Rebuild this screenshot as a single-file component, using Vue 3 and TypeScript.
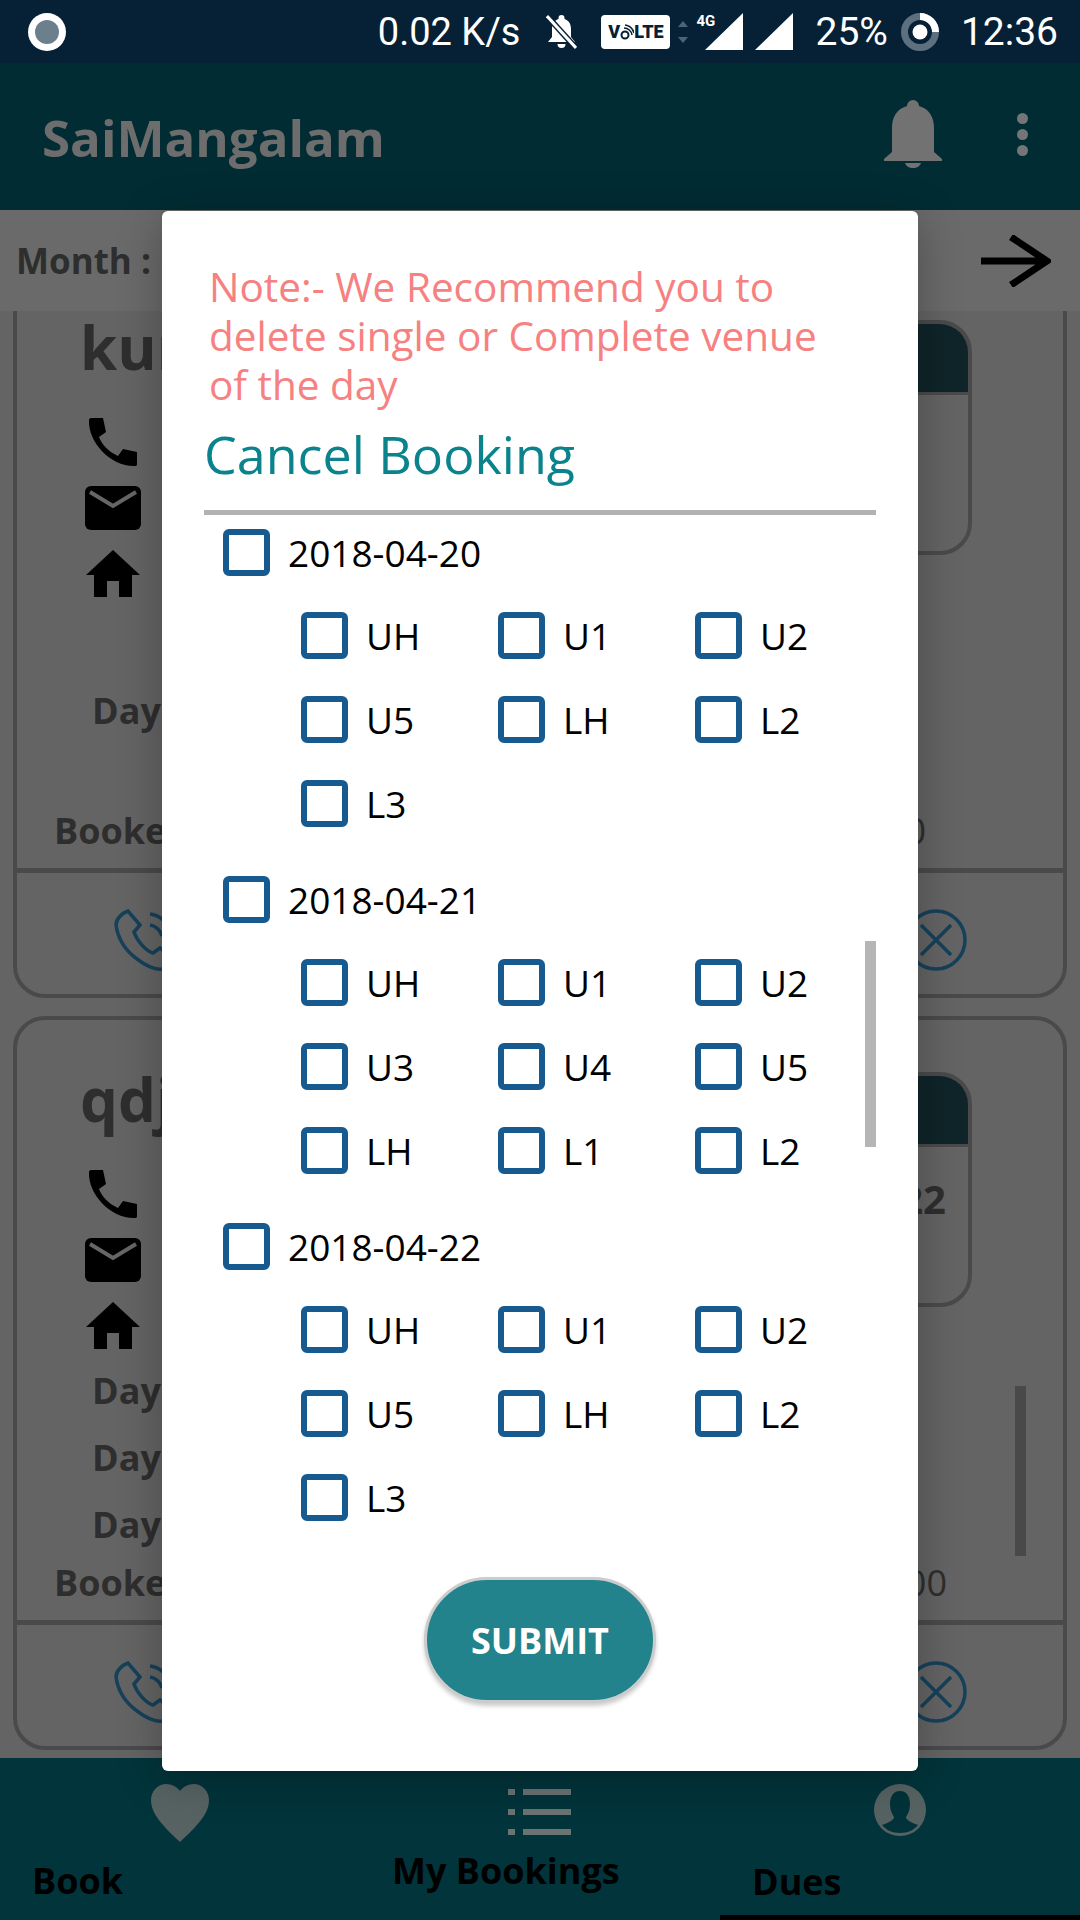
<script setup lang="ts">
type DateGroup = { date: string; venues: string[] };
type Booking = { name: string; days: string[]; slot: string; amount: string; amountInset: number };

const groups: DateGroup[] = [
  { date: "2018-04-20", venues: ["UH", "U1", "U2", "U5", "LH", "L2", "L3"] },
  { date: "2018-04-21", venues: ["UH", "U1", "U2", "U3", "U4", "U5", "LH", "L1", "L2"] },
  { date: "2018-04-22", venues: ["UH", "U1", "U2", "U5", "LH", "L2", "L3"] },
];

const bookings: Booking[] = [
  { name: "kuruva", days: ["Day 1"], slot: "", amount: "5000", amountInset: 137 },
  { name: "qdjk", days: ["Day 1", "Day 2", "Day 3"], slot: "22", amount: "15000", amountInset: 116 },
];
</script>

<template>
  <div class="screen">
    <header class="status">
      <span class="rec"><i></i></span>
      <div class="status-right">
        <span class="speed">0.02 K/s</span>
        <svg class="bell-off" viewBox="0 0 31 37" width="31" height="37">
          <path d="M15.500 2a3 3 0 0 1 3 3v1c5 1.500 6.500 6 6.500 10v8l4 5H2l4-5v-8c0-4 1.500-8.500 6.500-10V5a3 3 0 0 1 3-3z" fill="#fff" />
          <path d="M11.500 31h8a4 4 0 0 1-8 0z" fill="#fff" />
          <path d="M1 3l29 32" stroke="#062035" stroke-width="6" />
          <path d="M1 3l29 32" stroke="#fff" stroke-width="3" />
        </svg>
        <span class="volte">
          <span>V</span>
          <svg viewBox="0 0 14 16" width="14" height="16">
            <circle cx="5" cy="11" r="3.500" fill="none" stroke="#062035" stroke-width="2" />
            <path d="M4 4a8 8 0 0 1 8 7M5 1a11 11 0 0 1 9 8" fill="none" stroke="#062035" stroke-width="1.600" />
          </svg>
          <span>LTE</span>
        </span>
        <svg class="updown" viewBox="0 0 10 28" width="10" height="28">
          <path d="M5 3l5 6H0zM5 25l5-6H0z" fill="#4e6375" />
        </svg>
        <span class="signal">
          <span class="four-g">4G</span>
          <svg viewBox="0 0 38 37" width="38" height="37"><path d="M38 0v37H0z" fill="#fff" /></svg>
        </span>
        <svg class="tri2" viewBox="0 0 38 37" width="38" height="37"><path d="M38 0v37H0z" fill="#fff" /></svg>
        <span class="battery">25%</span>
        <svg class="ring" viewBox="0 0 38 38" width="38" height="38">
          <circle cx="19" cy="19" r="15.500" fill="none" stroke="#5c7080" stroke-width="7" />
          <path d="M19 3.500A15.500 15.500 0 0 1 34.500 19" fill="none" stroke="#fff" stroke-width="7" />
          <circle cx="19" cy="19" r="7.500" fill="#fff" />
        </svg>
        <span class="clock">12:36</span>
      </div>
    </header>

    <div class="appbar">
      <span class="brand">SaiMangalam</span>
      <svg class="bell" viewBox="0 0 58 68" width="58" height="68">
        <path d="M29 0a6 6 0 0 1 6 6c11 3 15 12 15 22v24l8 7v2H0v-2l8-7V28C8 18 12 9 23 6a6 6 0 0 1 6-6z" fill="#727272" />
        <path d="M21 63h16c-1 3-4 5-8 5s-7-2-8-5z" fill="#727272" />
      </svg>
      <span class="dots"><i></i><i></i><i></i></span>
    </div>

    <div class="month">
      <span class="month-label">Month :</span>
      <svg viewBox="0 0 70 52" width="70" height="52">
        <path d="M0 26h64M30 2l36 24-36 24" fill="none" stroke="#000" stroke-width="7" />
      </svg>
    </div>

    <main class="list">
      <section v-for="b in bookings" :key="b.name" class="card">
        <div class="card-body">
          <div class="info">
            <div class="name">{{ b.name }}</div>
            <div class="contact">
              <svg viewBox="0 0 50 50" width="50" height="50">
                <path d="M3 2h12l3 14-7 5c3 8 10 15 19 19l5-7 14 3v12c0 2-1 2-3 2C22 50 0 26 1 4c0-1 1-2 2-2z" fill="#000" />
              </svg>
              <svg viewBox="0 0 56 44" width="56" height="44">
                <rect width="56" height="44" rx="6" fill="#000" />
                <path d="M5 6l23 14L51 6" fill="none" stroke="#666" stroke-width="4" />
              </svg>
              <svg viewBox="0 0 54 47" width="54" height="47">
                <path d="M27 0l27 25h-8v22H33V31H21v16H8V25H0z" fill="#000" />
              </svg>
            </div>
            <div class="days">
              <span v-for="d in b.days" :key="d" class="day">{{ d }}</span>
            </div>
          </div>
          <div class="slot">
            <div class="slot-head"></div>
            <div class="slot-value">{{ b.slot }}</div>
          </div>
        </div>
        <div class="booked" :style="{ paddingRight: b.amountInset + 'px' }">
          <span>Booked by</span>
          <span class="amount">{{ b.amount }}</span>
        </div>
        <div class="actions">
          <svg viewBox="0 0 64 64" width="64" height="64">
            <path d="M14 3c-6 2-12 8-12 14 2 14 10 26 21 34 8 6 18 11 25 10 5-1 9-6 11-10l-13-11-7 5c-7-2-16-12-19-21l6-7z" fill="none" stroke="#15415a" stroke-width="3.500" />
            <path d="M36 6c10 1 20 10 22 22M36 17c6 1 10 5 12 11" fill="none" stroke="#15415a" stroke-width="3.500" />
          </svg>
          <svg viewBox="0 0 62 62" width="62" height="62">
            <circle cx="31" cy="31" r="29" fill="none" stroke="#15415a" stroke-width="3.500" />
            <path d="M16 16l30 30M46 16L16 46" fill="none" stroke="#15415a" stroke-width="3.500" />
          </svg>
        </div>
      </section>
      <div class="list-scroll"></div>
    </main>

    <nav class="tabs">
      <div class="tab">
        <svg viewBox="0 0 58 58" width="58" height="58">
          <path d="M29 58C12 42 0 30 0 16 0 7 7 0 15 0c6 0 11 3 14 7 3-4 8-7 14-7 8 0 15 7 15 16 0 14-12 26-29 42z" fill="#576363" />
        </svg>
        <span class="tab-label">Book</span>
      </div>
      <div class="tab tab-mid">
        <svg viewBox="0 0 64 48" width="64" height="48">
          <path d="M0 4h7M15 4h48M0 24h7M15 24h48M0 44h7M15 44h48" stroke="#6c7373" stroke-width="6" />
        </svg>
        <span class="tab-label">My Bookings</span>
      </div>
      <div class="tab tab-active">
        <svg viewBox="0 0 52 52" width="52" height="52">
          <circle cx="26" cy="26" r="26" fill="#576363" />
          <path d="M26 7c-7 0-10 6-10 13 0 6 2 10 4 13 0 3-4 5-12 8 4 5 10 8 18 8s14-3 18-8c-8-3-12-5-12-8 2-3 4-7 4-13 0-7-3-13-10-13z" fill="#02323a" />
        </svg>
        <span class="tab-label">Dues</span>
      </div>
    </nav>

    <div class="dialog">
      <p class="note">Note:- We Recommend you to delete single or Complete venue of the day</p>
      <h2 class="title">Cancel Booking</h2>
      <div class="rule"></div>
      <div class="picker">
        <div v-for="g in groups" :key="g.date" class="group">
          <label class="check date-row">
            <span class="box"></span>
            <span>{{ g.date }}</span>
          </label>
          <div class="venues">
            <label v-for="v in g.venues" :key="v" class="check">
              <span class="box"></span>
              <span>{{ v }}</span>
            </label>
          </div>
        </div>
        <div class="picker-scroll"></div>
      </div>
      <button class="submit">SUBMIT</button>
    </div>
  </div>
</template>

<style>
body {
  margin: 0;
  background: #666;
}
</style>

<style scoped>
.screen {
  position: relative;
  width: 1080px;
  height: 1920px;
  overflow: hidden;
  display: flex;
  flex-direction: column;
  font-family: "Open Sans", sans-serif;
  background: #666;
}

.status {
  height: 63px;
  background: #062035;
  display: flex;
  align-items: center;
  justify-content: space-between;
  color: #fff;
  font-family: Roboto, sans-serif;
  font-size: 39px;
  flex: none;
}
.rec {
  margin-left: 28px;
  width: 38px;
  height: 38px;
  border-radius: 50%;
  background: #fff;
  display: flex;
  align-items: center;
  justify-content: center;
}
.rec i {
  width: 24px;
  height: 24px;
  border-radius: 50%;
  background: #6c7f8c;
}
.status-right {
  display: flex;
  align-items: center;
  padding-right: 22px;
}
.speed {
  margin-right: 26px;
  font-size: 38px;
}
.bell-off {
  margin-right: 24px;
}
.volte {
  width: 69px;
  height: 34px;
  background: #fff;
  border-radius: 4px;
  color: #062035;
  font-size: 18px;
  font-weight: 900;
  display: flex;
  align-items: center;
  justify-content: center;
  margin-right: 8px;
}
.updown {
  margin-right: 17px;
}
.signal {
  position: relative;
  display: flex;
  width: 38px;
  margin-right: 12px;
}
.four-g {
  position: absolute;
  left: -9px;
  top: -1px;
  font-size: 15px;
  font-weight: 700;
}
.tri2 {
  margin-right: 22px;
}
.battery {
  margin-right: 13px;
}
.ring {
  margin-right: 22px;
}

.appbar {
  height: 147px;
  background: #012c33;
  display: flex;
  align-items: center;
  padding: 0 52px 0 42px;
  flex: none;
}
.brand {
  flex: 1;
  color: #6d6d6d;
  font-size: 51px;
  font-weight: 700;
}
.bell {
  margin-right: 75px;
  margin-bottom: 5px;
}
.dots {
  display: flex;
  flex-direction: column;
  gap: 5px;
  margin-bottom: 4px;
}
.dots i {
  width: 11px;
  height: 11px;
  border-radius: 50%;
  background: #757575;
}

.month {
  height: 101px;
  background: #6a6a6a;
  display: flex;
  align-items: center;
  justify-content: space-between;
  padding: 0 29px 0 16px;
  flex: none;
}
.month-label {
  color: #2e2e2e;
  font-size: 35px;
  font-weight: 700;
}

.list {
  position: relative;
  flex: 1;
  min-height: 0;
  overflow: hidden;
  padding: 0 13px;
  background: #646465;
}
.card {
  height: 734px;
  box-sizing: border-box;
  border: 4px solid #4b4a4b;
  border-radius: 32px;
  display: flex;
  flex-direction: column;
  margin-bottom: 18px;
}
.card:first-child {
  margin-top: -47px;
}
.card-body {
  flex: 1;
  min-height: 0;
  display: flex;
  justify-content: space-between;
}
.info {
  padding-left: 66px;
  display: flex;
  flex-direction: column;
}
.name {
  font-size: 60px;
  font-weight: 700;
  color: #2e2e2e;
  margin: 39px 0 0 -3px;
  height: 80px;
  line-height: 80px;
}
.contact {
  margin: 29px 0 0 2px;
  width: 56px;
  display: flex;
  flex-direction: column;
  align-items: center;
  gap: 20px;
}
.days {
  flex: 1;
  display: flex;
  flex-direction: column;
  justify-content: center;
  padding-top: 8px;
}
.card:first-child .days {
  padding-top: 18px;
}
.day {
  font-size: 36px;
  font-weight: 700;
  color: #2e2e2e;
  padding-left: 9px;
  height: 67px;
  line-height: 67px;
}
.slot {
  width: 240px;
  height: 235px;
  box-sizing: border-box;
  margin: 52px 91px 0 0;
  border: 4px solid #4b4a4b;
  border-radius: 32px;
  overflow: hidden;
}
.slot-head {
  height: 68px;
  background: #0f2529;
  border-bottom: 3px solid #4b4a4b;
}
.slot-value {
  text-align: right;
  padding: 24px 22px 0 0;
  font-size: 40px;
  font-weight: 700;
  color: #2e2e2e;
}
.booked {
  display: flex;
  justify-content: space-between;
  padding-left: 37px;
  height: 62px;
  font-size: 36px;
  font-weight: 700;
  color: #2e2e2e;
}
.amount {
  font-weight: 400;
}
.actions {
  height: 126px;
  box-sizing: border-box;
  border-top: 5px solid #4b4a4b;
  display: flex;
  justify-content: space-between;
  align-items: center;
  padding: 12px 96px 0 97px;
}
.list-scroll {
  position: absolute;
  left: 1015px;
  top: 1075px;
  width: 11px;
  height: 170px;
  background: #494949;
}

.tabs {
  height: 162px;
  background: #02343b;
  display: flex;
  flex: none;
}
.tab {
  width: 360px;
  box-sizing: border-box;
  position: relative;
  display: flex;
  flex-direction: column;
  align-items: center;
  padding-top: 26px;
}
.tab-label {
  align-self: flex-start;
  padding-left: 32px;
  margin-top: 14px;
  font-size: 36px;
  font-weight: 700;
  color: #000;
}
.tab-mid {
  padding-top: 30px;
}
.tab-mid .tab-label {
  margin-top: 10px;
}
.tab-active {
  border-bottom: 5px solid #000;
}
.tab-active .tab-label {
  margin-top: 21px;
}

.dialog {
  position: absolute;
  left: 162px;
  top: 211px;
  width: 756px;
  height: 1560px;
  box-sizing: border-box;
  padding: 51px 42px 0;
  background: #fff;
  border-radius: 6px;
  box-shadow: 0 8px 44px rgba(0, 0, 0, 0.28);
  display: flex;
  flex-direction: column;
}
.note {
  margin: 0 30px 0 5px;
  color: #f78080;
  font-size: 40.5px;
  line-height: 49px;
}
.title {
  margin: 13px 0 0 0;
  color: #0a838c;
  font-size: 52px;
  font-weight: 400;
  line-height: 64px;
}
.rule {
  height: 5px;
  background: #b2b2b2;
  margin-top: 24px;
  flex: none;
}
.picker {
  position: relative;
  height: 1050px;
  flex: none;
  padding: 3px 0 0 19px;
  box-sizing: border-box;
}
.group {
  margin-bottom: 28px;
}
.check {
  display: flex;
  align-items: center;
  gap: 18px;
  height: 68px;
  font-size: 37px;
  color: #000;
}
.date-row {
  gap: 18px;
}
.box {
  width: 47px;
  height: 47px;
  box-sizing: border-box;
  border: 6px solid #175a8f;
  border-radius: 6px;
  flex: none;
}
.venues {
  display: grid;
  grid-template-columns: repeat(3, 197px);
  row-gap: 16px;
  margin-top: 15px;
  padding-left: 78px;
}
.picker-scroll {
  position: absolute;
  right: 0;
  top: 426px;
  width: 11px;
  height: 206px;
  background: #b5b5b5;
}
.submit {
  align-self: center;
  width: 232px;
  height: 126px;
  margin-top: 12px;
  border: 3px solid #ccc;
  border-radius: 63px;
  background: #22838c;
  color: #fff;
  font-family: inherit;
  font-size: 36px;
  font-weight: 700;
  box-shadow: 0 3px 4px rgba(0, 0, 0, 0.2);
}
</style>
